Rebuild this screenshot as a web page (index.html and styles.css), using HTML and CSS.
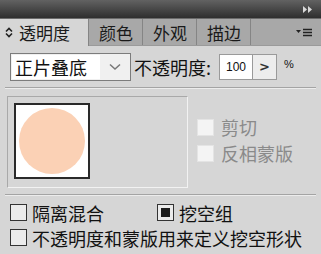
FILE: index.html
```html
<!DOCTYPE html>
<html lang="zh">
<head>
  <meta charset="UTF-8">
  <title>透明度</title>
  <link rel="stylesheet" href="styles.css">
</head>
<body>
  <div class="panel">
    <div class="titlebar">
      <svg class="collapse" width="10" height="7" viewBox="0 0 10 7"><path d="M0 0 L4 3.5 L0 7 Z M5 0 L9 3.5 L5 7 Z" fill="#d8d8d8"/></svg>
    </div>

    <div class="tabs">
      <div class="tab active">
        <svg class="updown" width="8" height="11" viewBox="0 0 8 11"><path d="M1 4.5 L4 1.5 L7 4.5 M1 6.5 L4 9.5 L7 6.5" fill="none" stroke="#222" stroke-width="1.6"/></svg>
        透明度
      </div>
      <div class="tab">颜色</div>
      <div class="tab">外观</div>
      <div class="tab">描边</div>
      <div class="tab-menu">
        <svg width="16" height="9" viewBox="0 0 16 9"><path d="M0 2 L5 2 L2.5 5 Z" fill="#222"/><path d="M7 1.5 H16 M7 4.5 H16 M7 7.5 H16" stroke="#222" stroke-width="1.3"/></svg>
      </div>
    </div>

    <div class="content">
      <div class="row-blend">
        <div class="select">
          <span class="select-text">正片叠底</span>
          <span class="select-btn">
            <svg width="12" height="8" viewBox="0 0 12 8"><path d="M1 1.5 L6 6 L11 1.5" fill="none" stroke="#777" stroke-width="1.5"/></svg>
          </span>
        </div>
        <span class="label">不透明度:</span>
        <div class="num">100</div>
        <div class="num-btn">&gt;</div>
        <span class="pct">%</span>
      </div>

      <div class="sep"></div>

      <div class="row-preview">
        <div class="preview">
          <div class="thumb"><div class="dot"></div></div>
        </div>
        <div class="mask-opts">
          <label class="check disabled"><span class="box"></span>剪切</label>
          <label class="check disabled"><span class="box"></span>反相蒙版</label>
        </div>
      </div>

      <div class="sep"></div>

      <div class="row-opts">
        <label class="check wide"><span class="box"></span>隔离混合</label>
        <label class="check"><span class="box on"></span>挖空组</label>
      </div>
      <label class="check"><span class="box"></span>不透明度和蒙版用来定义挖空形状</label>
    </div>
  </div>
</body>
</html>
```

FILE: styles.css
```css
body {
  margin: 0;
  background: #d6d6d6;
  font-family: "Noto Sans CJK SC", "Liberation Sans", sans-serif;
  color: #111;
}
.panel {
  width: 321px;
  height: 254px;
  overflow: hidden;
  background: #d6d6d6;
}
.titlebar {
  height: 18px;
  background: linear-gradient(to bottom, #626262, #2e2e2e);
  display: flex;
  justify-content: flex-end;
  align-items: center;
  padding-right: 8px;
  border-bottom: 1px solid #6a6a6a;
}
.tabs {
  height: 26px;
  display: flex;
  background: #a8a8a8;
  border-bottom: 1px solid #9a9a9a;
}
.tab {
  display: flex;
  align-items: center;
  padding: 0 9px 0 10px;
  font-size: 17px;
  border-right: 1px solid #858585;
  color: #1a1a1a;
}
.tab.active {
  background: #d6d6d6;
  padding-left: 5px;
  margin-bottom: -1px;
  width: 74px;
}
.updown {
  margin-right: 6px;
}
.tab-menu {
  flex: 1;
  display: flex;
  justify-content: flex-end;
  align-items: center;
  padding-right: 9px;
}
.content {
  padding: 7px 10px 0 10px;
}
.row-blend {
  display: flex;
  align-items: center;
  height: 28px;
}
.select {
  display: flex;
  width: 117px;
  height: 24px;
  border: 1px solid #7c7c7c;
  padding: 1px;
  background: #f0f0f0;
}
.select-text {
  background: #fff;
  width: 88px;
  font-size: 18px;
  line-height: 24px;
  padding-left: 3px;
  box-sizing: border-box;
}
.select-btn {
  flex: 1;
  display: flex;
  align-items: center;
  justify-content: center;
}
.label {
  font-size: 18px;
  margin-left: 3px;
  width: 85px;
}
.num {
  width: 32px;
  height: 24px;
  background: #fff;
  border: 1px solid #9a9a9a;
  font-family: "Liberation Sans", sans-serif;
  font-size: 12px;
  line-height: 24px;
  text-align: center;
}
.num-btn {
  width: 23px;
  height: 24px;
  background: #ededed;
  border: 1px solid #9a9a9a;
  border-left: none;
  font-family: "DejaVu Sans", sans-serif;
  font-weight: bold;
  font-size: 13px;
  line-height: 24px;
  text-align: center;
  color: #333;
}
.pct {
  font-family: "Liberation Sans", sans-serif;
  font-size: 11px;
  margin-left: 7px;
  margin-top: -6px;
}
.sep {
  height: 1px;
  background: #a4a4a4;
  border-bottom: 1px solid #ececec;
  margin: 6px -5px 0 -5px;
}
.row-preview {
  display: flex;
  align-items: flex-start;
  margin: 7px 0 2px 0;
}
.preview {
  width: 181px;
  height: 92px;
  margin-left: -3px;
  border: 1px solid #a9a9a9;
  border-right-color: #f2f2f2;
  border-bottom-color: #f2f2f2;
  padding: 6px 6px;
  box-sizing: border-box;
}
.thumb {
  width: 76px;
  height: 76px;
  box-sizing: border-box;
  border: 2px solid #2a2a2a;
  background: #fff;
  display: flex;
  align-items: center;
  justify-content: center;
}
.dot {
  width: 66px;
  height: 66px;
  border-radius: 50%;
  background: #fbd1b5;
}
.mask-opts {
  display: flex;
  flex-direction: column;
  gap: 8px;
  margin-left: 9px;
  margin-top: 22px;
}
.check {
  display: flex;
  align-items: center;
  font-size: 18px;
  height: 25px;
  white-space: nowrap;
}
.box {
  width: 15px;
  height: 15px;
  border: 1px solid #333;
  background: #ebebeb;
  margin-right: 5px;
  display: flex;
  align-items: center;
  justify-content: center;
}
.box.on::after {
  content: "";
  width: 9px;
  height: 9px;
  background: #1c1c1c;
}
.disabled {
  color: #8a8a8a;
  height: 18px;
}
.disabled .box {
  border-color: #e4e4e4;
  background: #f4f4f4;
  margin-right: 7px;
}
.row-opts {
  display: flex;
  margin-top: 4px;
}
.check.wide {
  width: 147px;
}
```
